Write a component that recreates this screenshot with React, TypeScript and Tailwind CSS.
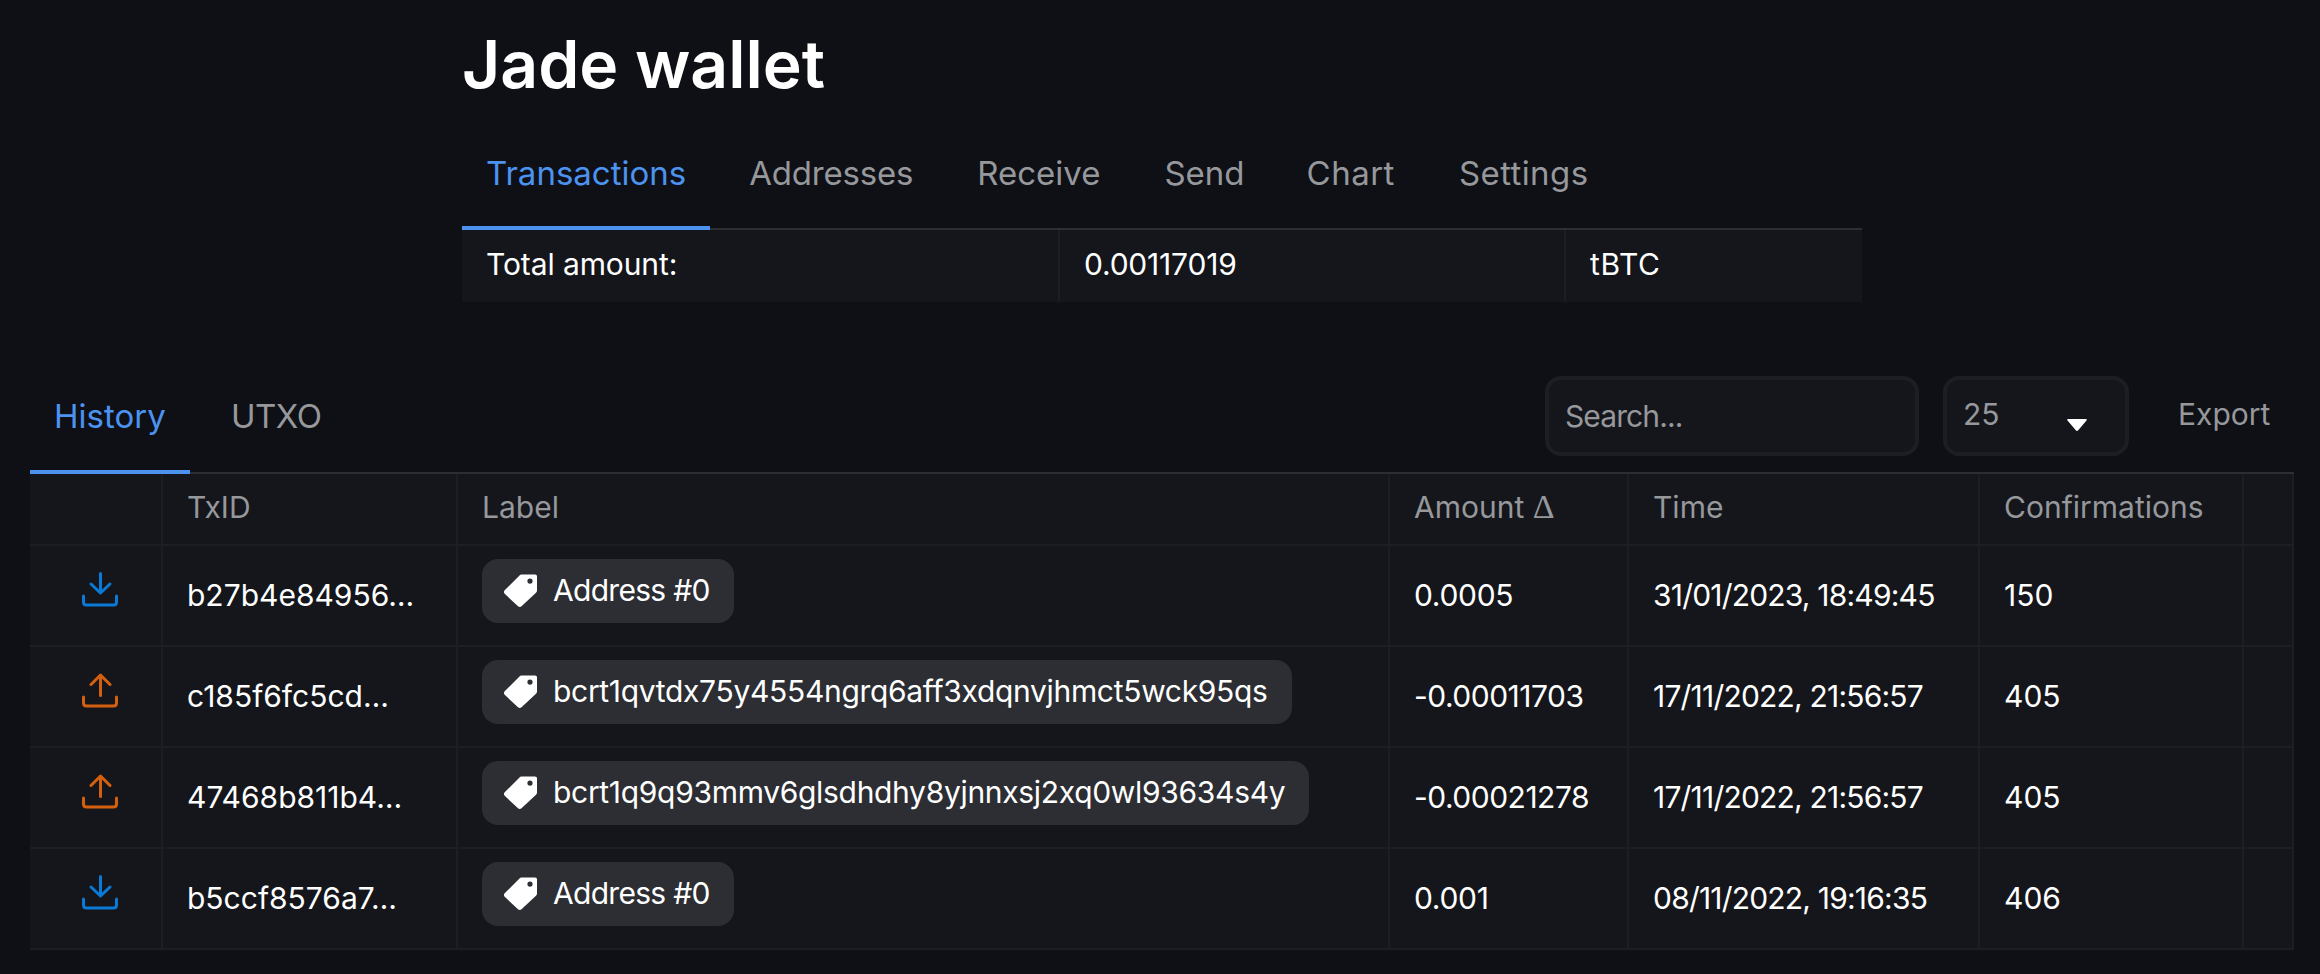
import React from "react";

const DownIcon = () => (
  <svg width="36" height="36" viewBox="0 0 36 36" fill="none" stroke="#0b7ad6" strokeWidth="3" strokeLinecap="round" strokeLinejoin="round">
    <path d="M18.500 1.500V21M9 12L18.500 21L28 12" />
    <path d="M1.500 24V30C1.500 32 2.500 33 4.500 33H31.500C33.500 33 34.500 32 34.500 30V24" />
  </svg>
);
const UpIcon = () => (
  <svg width="36" height="36" viewBox="0 0 36 36" fill="none" stroke="#d4600f" strokeWidth="3" strokeLinecap="round" strokeLinejoin="round">
    <path d="M18.500 22.500V2M9 11.500L18.500 2L28 11.500" />
    <path d="M1.500 24V30C1.500 32 2.500 33 4.500 33H31.500C33.500 33 34.500 32 34.500 30V24" />
  </svg>
);
const TagIcon = () => (
  <svg width="36" height="36" viewBox="0 0 36 36" className="shrink-0">
    <path fillRule="evenodd" fill="#ffffff" d="M17.500 2.500C18 2 18.700 1.500 19.500 1.500H33C34.300 1.500 35 2.200 35 3.500V17.500C35 18.300 34.700 19 34 19.700L19.500 33.300C18.500 34.200 17 34.200 16 33.200L2.700 20.800C1.700 19.800 1.700 18.300 2.700 17.300ZM28 5.500A2.600 2.600 0 1 0 28 10.700A2.600 2.600 0 1 0 28 5.500Z" />
  </svg>
);

const rows = [
  { dir: "in", id: "b27b4e84956…", label: "Address #0", amt: "0.0005", time: "31/01/2023, 18:49:45", conf: "150" },
  { dir: "out", id: "c185f6fc5cd…", label: "bcrt1qvtdx75y4554ngrq6aff3xdqnvjhmct5wck95qs", amt: "-0.00011703", time: "17/11/2022, 21:56:57", conf: "405" },
  { dir: "out", id: "47468b811b4…", label: "bcrt1q9q93mmv6glsdhdhy8yjnnxsj2xq0wl93634s4y", amt: "-0.00021278", time: "17/11/2022, 21:56:57", conf: "405" },
  { dir: "in", id: "b5ccf8576a7…", label: "Address #0", amt: "0.001", time: "08/11/2022, 19:16:35", conf: "406" },
];

const th = "border-r-2 border-b-2 border-[#1c1e23] px-6 pb-[4px] align-middle font-normal";
const td = "border-r-2 border-b-2 border-[#1c1e23] px-6 pb-[1px] align-middle";

export default function App() {
  return (
    <div className="min-h-[974px] bg-[#0e1015] font-['Inter',sans-serif] text-[30px] text-white overflow-hidden">
      <div className="ml-[462px] w-[1400px]">
        <h1 className="text-[66px] leading-[72px] font-semibold pt-[28px]">Jade wallet</h1>
        <div className="flex mt-[33px] border-b-2 border-[#2c2e33] text-[33px] text-[#96989c]">
          <div className="px-6 h-[97px] pt-[16px] text-[#4c93f0] border-b-4 -mb-[2px] border-[#4c93f0]">Transactions</div>
          <div className="pl-[39px] pr-[40px] pt-[16px] tracking-[-0.2px]">Addresses</div>
          <div className="pl-[24px] pr-[40px] pt-[16px]">Receive</div>
          <div className="pl-[24px] pr-[38px] pt-[16px]">Send</div>
          <div className="pl-[24px] pr-[40px] pt-[16px] tracking-[0.5px]">Chart</div>
          <div className="pl-[24px] pr-[40px] pt-[16px] tracking-[0.4px]">Settings</div>
        </div>
        <div className="flex h-[72px] items-center bg-[#14161b]">
          <div className="w-[598px] h-full px-6 pb-[3px] flex items-center border-r-2 border-[#1c1e23] tracking-[-0.1px]">Total amount:</div>
          <div className="w-[506px] h-full px-6 pb-[3px] flex items-center border-r-2 border-[#1c1e23] tracking-[-0.2px]">0.00117019</div>
          <div className="px-6 pb-[3px] tracking-[0.6px]">tBTC</div>
        </div>
      </div>

      <div className="ml-[30px] w-[2264px] mt-[72px]">
        <div className="flex items-end justify-between border-b-2 border-[#2c2e33] h-[100px]">
          <div className="flex text-[33px] text-[#96989c] h-full">
            <div className="px-6 w-[160px] pt-[18px] text-[#4c93f0] border-b-4 -mb-[2px] border-[#4c93f0]">History</div>
            <div className="px-[41px] pt-[18px] tracking-[-0.5px]">UTXO</div>
          </div>
          <div className="flex items-start h-full gap-[24px] text-[#96989c] pt-[2px]">
            <div className="w-[374px] h-[80px] rounded-2xl bg-[#14161b] border-4 border-[#1c1e23] px-[16px] flex items-center tracking-[-0.9px]">Search...</div>
            <div className="w-[186px] h-[80px] rounded-2xl bg-[#14161b] border-4 border-[#1c1e23] pl-[16px] pr-[38px] flex items-center justify-between">
              <span className="-mt-1">25</span>
              <svg width="20" height="12" viewBox="0 0 20 12" className="mt-[17px]"><path d="M1 0H19C20 0 20 1 19.500 1.500L11 11.500C10.500 12 9.500 12 9 11.500L0.500 1.500C0 1 0 0 1 0Z" fill="#fff" /></svg>
            </div>
            <div className="ml-[25px] mr-[25px] w-[91px] h-[76px] flex items-center">Export</div>
          </div>
        </div>
        <table className="w-[2264px] table-fixed border-collapse bg-[#14161b]">
          <colgroup>
            <col className="w-[132px]" />
            <col className="w-[295px]" />
            <col className="w-[932px]" />
            <col className="w-[239px]" />
            <col className="w-[351px]" />
            <col className="w-[264px]" />
            <col />
          </colgroup>
          <thead>
            <tr className="h-[71px] text-left text-[#96989c]">
              <th className={th}></th>
              <th className={th}>TxID</th>
              <th className={th}>Label</th>
              <th className={th + " whitespace-nowrap"}>Amount <span className="text-[34px] leading-none font-['Liberation_Serif',serif]">Δ</span></th>
              <th className={th}>Time</th>
              <th className={th + " whitespace-nowrap"}>Confirmations</th>
              <th className={th}></th>
            </tr>
          </thead>
          <tbody>
            {rows.map((r, i) => (
              <tr key={i} className="h-[101px]">
                <td className={td}>
                  <div className="flex justify-center ml-[9px] -mt-[10px]">{r.dir === "in" ? <DownIcon /> : <UpIcon />}</div>
                </td>
                <td className={td + " whitespace-nowrap"}>{r.id}</td>
                <td className={td}>
                  <div className={"flex w-fit items-center gap-[15px] h-[64px] rounded-2xl bg-[#2c2e33] pl-[20px] pr-[24px] -mt-[9px] whitespace-nowrap " + (r.label.length > 20 ? "tracking-[-0.31px]" : "tracking-[-0.7px]")}>
                    <TagIcon />
                    <span>{r.label}</span>
                  </div>
                </td>
                <td className={td + (r.amt.length > 6 ? " tracking-[-0.5px]" : " tracking-[-0.3px]")}>{r.amt}</td>
                <td className={td + " whitespace-nowrap tracking-[-0.8px]"}>{r.time}</td>
                <td className={td}>{r.conf}</td>
                <td className={td}></td>
              </tr>
            ))}
          </tbody>
        </table>
      </div>
    </div>
  );
}
